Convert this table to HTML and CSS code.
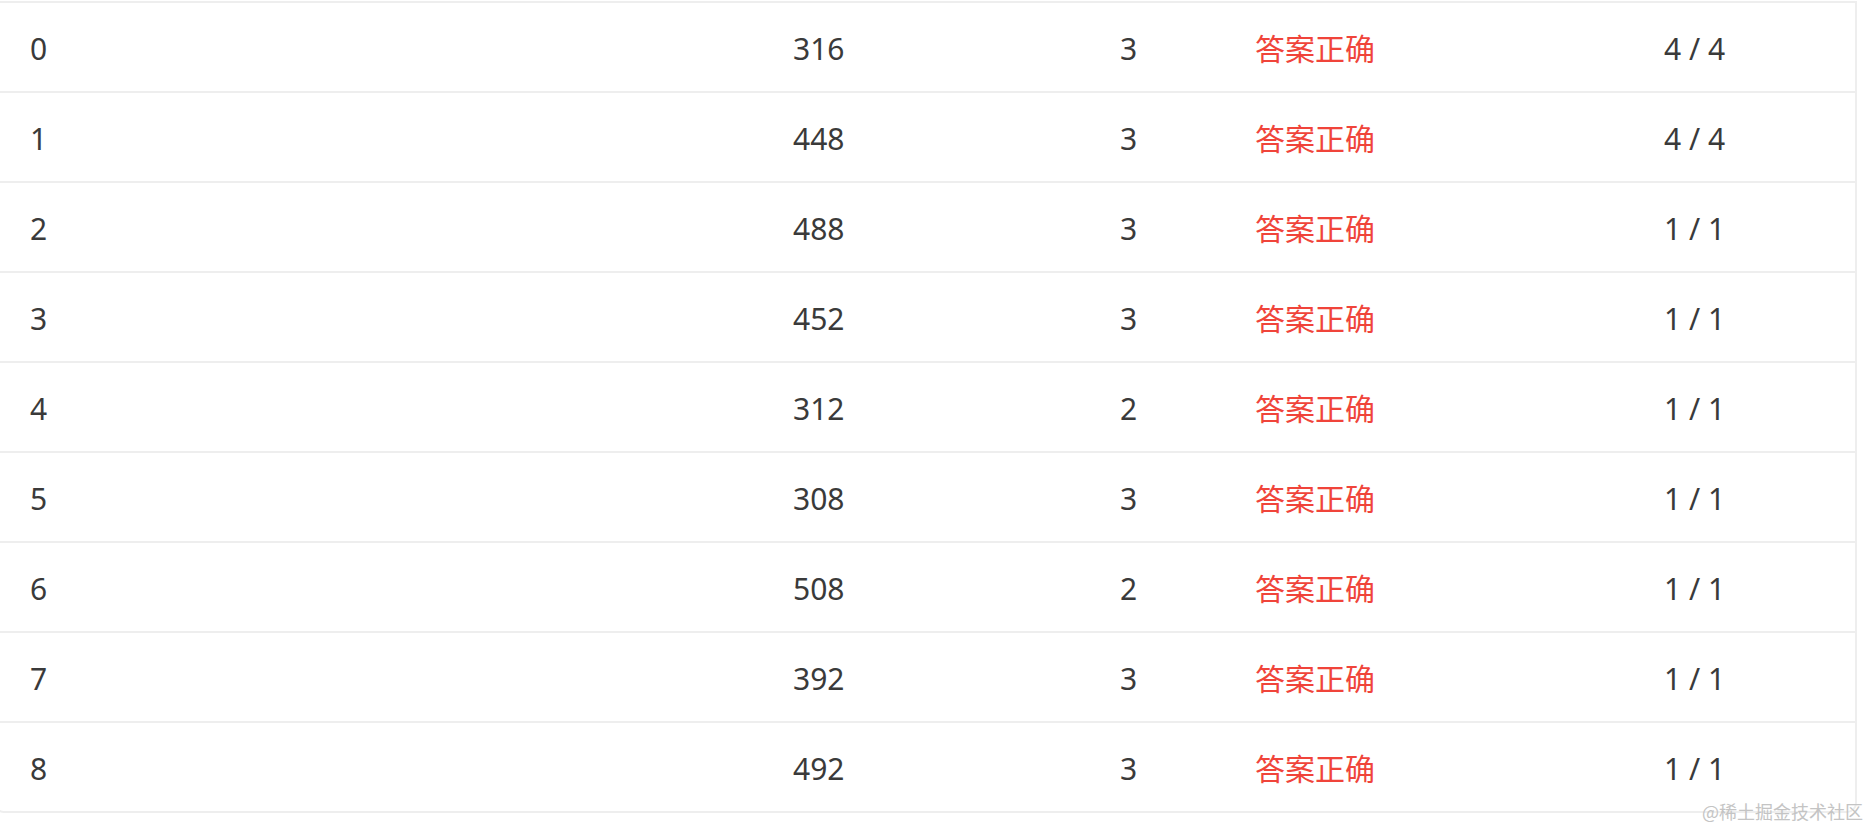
FILE: index.html
```html
<!DOCTYPE html>
<html lang="zh">
<head>
<meta charset="utf-8">
<link rel="stylesheet" href="styles.css">
</head>
<body>
<div class="card">
  <div class="row"><div class="c idx">0</div><div class="c">316</div><div class="c">3</div><div class="c ok">答案正确</div><div class="c">4 / 4</div></div>
  <div class="row"><div class="c idx">1</div><div class="c">448</div><div class="c">3</div><div class="c ok">答案正确</div><div class="c">4 / 4</div></div>
  <div class="row"><div class="c idx">2</div><div class="c">488</div><div class="c">3</div><div class="c ok">答案正确</div><div class="c">1 / 1</div></div>
  <div class="row"><div class="c idx">3</div><div class="c">452</div><div class="c">3</div><div class="c ok">答案正确</div><div class="c">1 / 1</div></div>
  <div class="row"><div class="c idx">4</div><div class="c">312</div><div class="c">2</div><div class="c ok">答案正确</div><div class="c">1 / 1</div></div>
  <div class="row"><div class="c idx">5</div><div class="c">308</div><div class="c">3</div><div class="c ok">答案正确</div><div class="c">1 / 1</div></div>
  <div class="row"><div class="c idx">6</div><div class="c">508</div><div class="c">2</div><div class="c ok">答案正确</div><div class="c">1 / 1</div></div>
  <div class="row"><div class="c idx">7</div><div class="c">392</div><div class="c">3</div><div class="c ok">答案正确</div><div class="c">1 / 1</div></div>
  <div class="row"><div class="c idx">8</div><div class="c">492</div><div class="c">3</div><div class="c ok">答案正确</div><div class="c">1 / 1</div></div>
</div>
<div class="watermark">@稀土掘金技术社区</div>
</body>
</html>
```
FILE: styles.css
```css
html, body {
  margin: 0;
  padding: 0;
  background: #ffffff;
}
body {
  font-family: "Noto Sans", "Noto Sans CJK SC", sans-serif;
  color: #3a3a3a;
  overflow: hidden;
  height: 828px;
  position: relative;
}
.card {
  margin-top: 1px;
  margin-left: -6px;
  width: 1859px;
  border: 2px solid #eeeeee;
  border-radius: 0 0 10px 10px;
  background: #fff;
}
.row {
  display: grid;
  grid-template-columns: 797px 327px 135px 409px 1fr;
  height: 88px;
  align-items: center;
  border-bottom: 2px solid #eeeeee;
}
.row:last-child {
  border-bottom: none;
}
.c {
  font-size: 30px;
  line-height: 40px;
  padding-top: 4px;
  white-space: nowrap;
}
.idx {
  padding-left: 34px;
}
.ok {
  color: #f0443a;
  font-family: "Noto Sans CJK SC", sans-serif;
  padding-top: 0;
}
.watermark {
  position: absolute;
  right: 2px;
  bottom: 6px;
  font-family: "Noto Sans CJK SC", sans-serif;
  font-size: 18px;
  line-height: 22px;
  color: #c4c4c4;
}
```
